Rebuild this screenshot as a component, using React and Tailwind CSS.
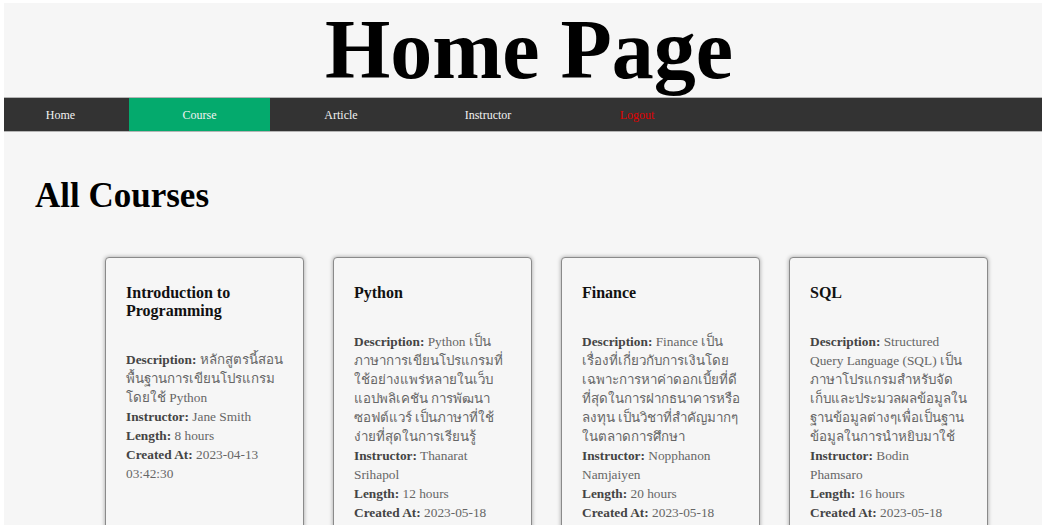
import React from "react";

const courses = [
  {
    title: "Introduction to Programming",
    desc: ["หลักสูตรนี้สอน", "พื้นฐานการเขียนโปรแกรม", "โดยใช้ Python"],
    instructor: ["Jane Smith"],
    length: "8 hours",
    created: ["2023-04-13", "03:42:30"],
  },
  {
    title: "Python",
    desc: [
      "Python เป็น",
      "ภาษาการเขียนโปรแกรมที่",
      "ใช้อย่างแพร่หลายในเว็บ",
      "แอปพลิเคชัน การพัฒนา",
      "ซอฟต์แวร์ เป็นภาษาที่ใช้",
      "ง่ายที่สุดในการเรียนรู้",
    ],
    instructor: ["Thanarat", "Srihapol"],
    length: "12 hours",
    created: ["2023-05-18", "10:21:45"],
  },
  {
    title: "Finance",
    desc: [
      "Finance เป็น",
      "เรื่องที่เกี่ยวกับการเงินโดย",
      "เฉพาะการหาค่าดอกเบี้ยที่ดี",
      "ที่สุดในการฝากธนาคารหรือ",
      "ลงทุน เป็นวิชาที่สำคัญมากๆ",
      "ในตลาดการศึกษา",
    ],
    instructor: ["Nopphanon", "Namjaiyen"],
    length: "20 hours",
    created: ["2023-05-18", "10:25:12"],
  },
  {
    title: "SQL",
    desc: [
      "Structured",
      "Query Language (SQL) เป็น",
      "ภาษาโปรแกรมสำหรับจัด",
      "เก็บและประมวลผลข้อมูลใน",
      "ฐานข้อมูลต่างๆเพื่อเป็นฐาน",
      "ข้อมูลในการนำหยิบมาใช้",
    ],
    instructor: ["Bodin", "Phamsaro"],
    length: "16 hours",
    created: ["2023-05-18", "10:30:08"],
  },
];

const navItems = [
  { label: "Home", w: "w-[125px] pr-[12px]", cls: "text-[#f2f2f2]" },
  { label: "Course", w: "w-[141px]", cls: "text-[#f2f2f2] bg-[#04AA6D]" },
  { label: "Article", w: "w-[142px]", cls: "text-[#f2f2f2]" },
  { label: "Instructor", w: "w-[152px]", cls: "text-[#f2f2f2]" },
  { label: "Logout", w: "w-[146px]", cls: "text-[#e00000]" },
];

function Field({ label, lines }) {
  return (
    <p>
      <span className="font-bold text-[#444]">{label}</span>{" "}
      {lines.map((l, i) => (
        <React.Fragment key={i}>
          {i > 0 && <br />}
          <span className="whitespace-nowrap">{l}</span>
        </React.Fragment>
      ))}
    </p>
  );
}

function Card({ c }) {
  return (
    <div className="w-[199px] shrink-0 bg-[#f6f6f6] border border-[#8a8a8a] rounded-[4px] shadow-[0_0_4px_rgba(0,0,0,0.35)] pt-[26px] pl-[20px] pr-[16px] pb-[40px]">
      <h3 className="text-[16px] leading-[18px] font-bold text-[#111] mb-[30px]">{c.title}</h3>
      <div className="text-[13.33px] leading-[19px] text-[#666]">
        <Field label="Description:" lines={c.desc} />
        <Field label="Instructor:" lines={c.instructor} />
        <Field label="Length:" lines={[c.length]} />
        <Field label="Created At:" lines={c.created} />
      </div>
    </div>
  );
}

export default function App() {
  return (
    <div className="bg-white pl-[4px] pt-[3px] min-h-[525px] overflow-hidden" style={{ fontFamily: '"Liberation Serif", "Times New Roman", serif' }}>
      <div className="bg-[#f6f6f6] min-h-[522px]">
        <h1 className="text-center pl-[12px] text-[84px] leading-[94px] font-bold text-black">Home Page</h1>
        <nav className="flex h-[35px] bg-[#333] border-y border-[#b5b5b5]">
          {navItems.map((n) => (
            <a key={n.label} className={`${n.w} ${n.cls} flex items-center justify-center text-[12px]`}>
              {n.label}
            </a>
          ))}
        </nav>
        <div className="pl-[31px] pt-[44px]">
          <h2 className="text-[35px] leading-[40px] font-bold text-black">All Courses</h2>
          <div className="flex gap-[29px] pl-[70px] mt-[41px] items-stretch">
            {courses.map((c) => (
              <Card key={c.title} c={c} />
            ))}
          </div>
        </div>
      </div>
    </div>
  );
}
